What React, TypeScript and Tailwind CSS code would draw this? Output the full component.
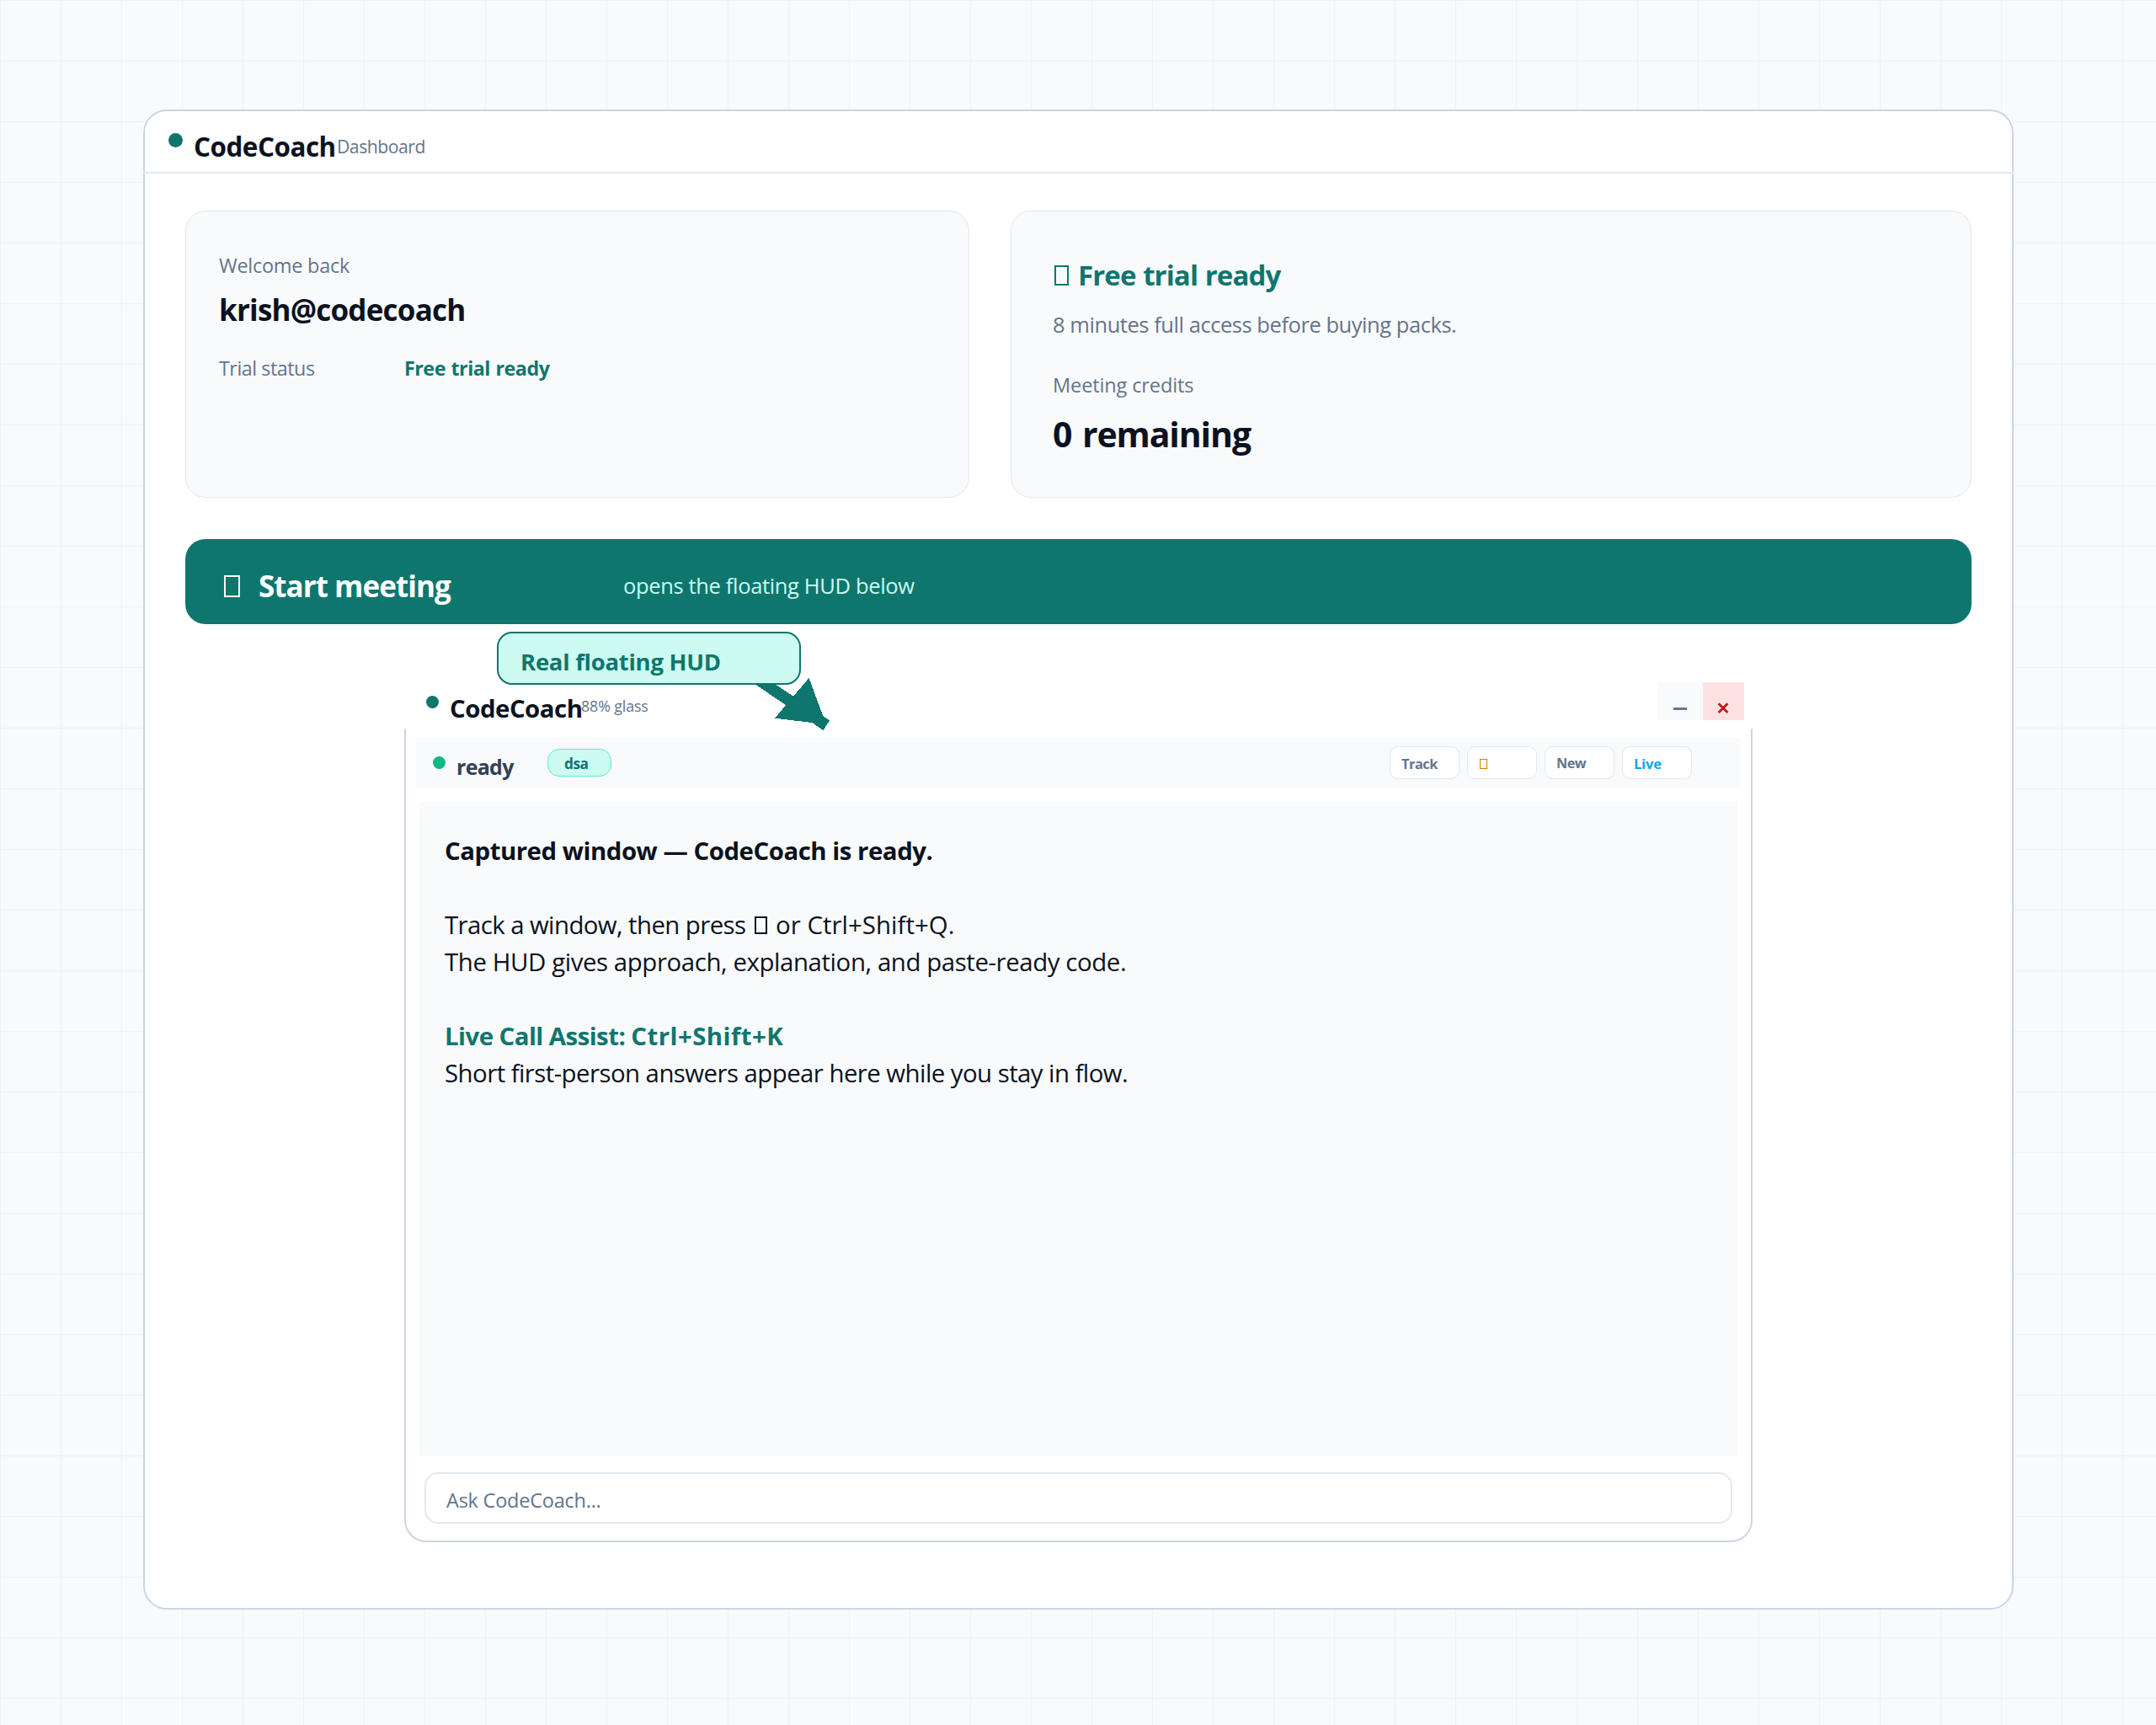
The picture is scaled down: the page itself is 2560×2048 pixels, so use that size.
import type { ReactNode } from 'react';
import clsx from 'clsx';

interface ToolbarAction {
    id: string;
    label: ReactNode;
    className: string;
}

// Empty glyph box shown where an emoji icon is not available
function Glyph({ className }: { className: string }) {
    return <span className={clsx('inline-block shrink-0 border-current', className)} />;
}

const toolbarActions: ToolbarAction[] = [
    { id: 'track', label: 'Track', className: 'pl-[13px] text-[16.4px] tracking-[-0.5px] text-[#64748b]' },
    {
        id: 'capture',
        label: <Glyph className="mt-[13px] h-3 w-[9px] border" />,
        className: 'pl-[14px] text-[#d97706]',
    },
    { id: 'new', label: 'New', className: 'pl-[13px] text-[16.2px] tracking-[-0.5px] text-[#64748b]' },
    { id: 'live', label: 'Live', className: 'pl-[13px] text-[16.5px] tracking-[-0.2px] text-[#0ea5e9]' },
];

function TitleBar() {
    return (
        <header className="-mx-[2px] flex h-[74px] items-start border-b-2 border-[#e2e8f0] pl-[30px] leading-10">
            <span className="mt-[26px] size-[17px] rounded-full bg-[#0f766e]" />
            <h1 className="mt-[22px] ml-[13px] w-[170px] text-[31.4px] font-bold tracking-[-0.48px]">CodeCoach</h1>
            <span className="mt-[22px] text-[21.2px] tracking-[-0.5px] text-[#64748b]">Dashboard</span>
        </header>
    );
}

function AccountCard() {
    return (
        <section className="h-[341px] w-[931px] rounded-3xl border border-[#e2e8f0] bg-[#f8fafc] pt-[44px] pl-[39px] leading-10">
            <p className="text-[23.5px] tracking-[-0.28px] text-[#64748b]">Welcome back</p>
            <p className="mt-[13px] text-[35px] font-bold tracking-[-0.8px]">krish@codecoach</p>
            <div className="mt-[29px] flex text-[23.3px]">
                <span className="w-[220px] tracking-[-0.47px] text-[#64748b]">Trial status</span>
                <span className="font-bold tracking-[-0.5px] text-[#0f766e] [word-spacing:1px]">
                    Free trial ready
                </span>
            </div>
        </section>
    );
}

function CreditsCard() {
    return (
        <section className="h-[341px] w-[1141px] rounded-3xl border border-[#e2e8f0] bg-[#f8fafc] pt-[55px] pl-[49px] leading-10">
            <div className="flex items-start text-[#0f766e]">
                <Glyph className="mt-[9px] ml-[2px] h-6 w-[17px] border-2" />
                <span className="mt-px ml-[11px] text-[33px] font-bold tracking-[-0.9px] [word-spacing:1px]">
                    Free trial ready
                </span>
            </div>
            <p className="mt-[18px] text-[25.5px] tracking-[-0.45px] text-[#64748b]">
                8 minutes full access before buying packs.
            </p>
            <p className="mt-[32px] text-[23.6px] tracking-[-0.16px] text-[#64748b]">Meeting credits</p>
            <p className="mt-[18px] text-[41px] font-bold tracking-[-1.1px] [word-spacing:3px]">0 remaining</p>
        </section>
    );
}

function StartMeetingBar() {
    return (
        <button className="mt-[49px] flex h-[101px] w-full items-start rounded-3xl bg-[#0f766e] text-left leading-10 text-white">
            <Glyph className="mt-[43px] ml-[46px] h-[26px] w-[19px] border-2" />
            <span className="mt-[36px] ml-[22px] w-[433px] text-[35px] font-bold tracking-[-0.95px]">
                Start meeting
            </span>
            <span className="mt-[35px] text-[25.5px] tracking-[-0.35px] text-[#ccfbf1]">
                opens the floating HUD below
            </span>
        </button>
    );
}

function HudCallout() {
    return (
        <>
            <svg
                className="absolute -top-[5px] left-[400px]"
                width="120"
                height="80"
                viewBox="880 800 120 80"
                fill="#0f766e"
                shapeRendering="crispEdges"
            >
                <polygon points="884,804 908,804 985,855.3 977.7,867" />
                <polygon points="960.5,805 981,860 920,852.7" />
            </svg>
            <div className="absolute -top-[55px] left-[110px] h-[63px] w-[361px] rounded-[18px] border-2 border-[#0f766e] bg-[#ccfbf1] pt-1 pl-[26px] text-[27.5px] leading-[59px] font-bold tracking-[-0.27px] text-[#0f766e]">
                Real floating HUD
            </div>
        </>
    );
}

function HudTitle() {
    return (
        <div className="relative flex h-[60px] items-start leading-10">
            <span className="mt-[21px] ml-[26px] size-[15px] rounded-full bg-[#0f766e]" />
            <h2 className="mt-4 ml-[13px] w-[156px] text-[29.4px] font-bold tracking-[-0.5px]">CodeCoach</h2>
            <span className="mt-[13px] text-[17.8px] tracking-[-0.1px] text-[#64748b]">88% glass</span>
            <div className="mt-[5px] mr-[10px] ml-auto flex h-[45px]">
                <button className="w-[54px] bg-[#f8fafc]" aria-label="Minimize">
                    <svg width="54" height="45" viewBox="0 0 54 45" fill="#64748b">
                        <rect x="19" y="30" width="16" height="3" />
                    </svg>
                </button>
                <button className="w-[49px] bg-[#fee2e2]" aria-label="Close">
                    <svg width="49" height="45" viewBox="0 0 49 45" stroke="#b91c1c" strokeWidth="2.8">
                        <path d="M18.6 25.2l10.8 10.8M29.4 25.2L18.6 36" />
                    </svg>
                </button>
            </div>
            <HudCallout />
        </div>
    );
}

function HudToolbar() {
    return (
        <div className="mx-3 mt-[11px] flex h-[59px] items-start bg-[#f8fafc]">
            <span className="mt-[22px] ml-5 size-[15px] rounded-full bg-[#10b981]" />
            <span className="mt-[14px] ml-[13px] w-[108px] text-[25px] leading-10 font-bold tracking-[-0.7px] text-[#334155]">
                ready
            </span>
            <span className="mt-[13px] h-[33px] w-[76px] rounded-[14px] border border-[#5eead4] bg-[#ccfbf1] pt-px pl-[19px] text-[17.3px] leading-[31px] font-bold tracking-[-0.5px] text-[#0f766e]">
                dsa
            </span>
            <div className="mt-[10px] mr-[58px] ml-auto flex gap-[9px]">
                {toolbarActions.map((action) => (
                    <button
                        key={action.id}
                        className={clsx(
                            'flex h-[39px] w-[83px] items-start rounded-[10px] border border-[#e2e8f0] bg-white pt-px leading-[37px] font-bold',
                            action.className
                        )}
                    >
                        {action.label}
                    </button>
                ))}
            </div>
        </div>
    );
}

function HudAnswer() {
    return (
        <div className="mx-4 mt-[17px] h-[777px] bg-[#f8fafc] pt-9 pl-[30px] text-[29.4px] leading-[44px]">
            <p className="font-bold tracking-[-0.48px]">Captured window — CodeCoach is ready.</p>
            <div className="mt-[44px] flex items-start">
                <span className="w-[368px] tracking-[-0.59px]">Track a window, then press</span>
                <Glyph className="mt-3 h-[21px] w-[15px] border-2" />
                <span className="ml-[10px] tracking-[0.04px]">or Ctrl+Shift+Q.</span>
            </div>
            <p className="tracking-[-0.41px]">The HUD gives approach, explanation, and paste-ready code.</p>
            <p className="mt-[44px] font-bold text-[#0f766e]">
                <span className="tracking-[-0.55px]">Live Call Assist: </span>
                <span className="tracking-[0.45px]">Ctrl+Shift+K</span>
            </p>
            <p className="tracking-[-0.55px]">Short first-person answers appear here while you stay in flow.</p>
        </div>
    );
}

function FloatingHud() {
    return (
        <section className="mx-auto mt-[64px] w-[1601px]">
            <HudTitle />
            <div className="h-[966px] overflow-hidden rounded-b-[26px] border-2 border-t-0 border-[#cbd5e1]">
                <HudToolbar />
                <HudAnswer />
                <div className="mx-[22px] mt-[19px] h-[61px] rounded-2xl border-2 border-[#e2e8f0] bg-white pt-[3px] pl-6 text-[23.5px] leading-[57px] tracking-[-0.23px] text-[#64748b]">
                    Ask CodeCoach...
                </div>
            </div>
        </section>
    );
}

export default function App() {
    return (
        <div className="h-[2048px] w-[2560px] overflow-hidden bg-[#f8fafc] bg-[linear-gradient(to_right,#eef2f7_1px,transparent_1px),linear-gradient(to_bottom,#eef2f7_1px,transparent_1px)] bg-[size:72px_72px] pt-[130px] pl-[170px] font-['Open_Sans','Noto_Sans',sans-serif] whitespace-nowrap text-[#0b1220]">
            <main className="h-[1781px] w-[2221px] rounded-[28px] border-2 border-[#cbd5e1] bg-white">
                <TitleBar />
                <div className="px-12 pt-[44px]">
                    <div className="flex gap-[49px]">
                        <AccountCard />
                        <CreditsCard />
                    </div>
                    <StartMeetingBar />
                    <FloatingHud />
                </div>
            </main>
        </div>
    );
}
